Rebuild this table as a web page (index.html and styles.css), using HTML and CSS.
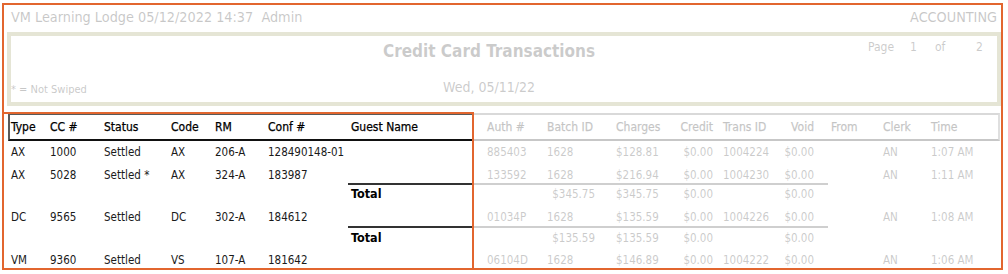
FILE: index.html
```html
<!DOCTYPE html>
<html>
<head>
<meta charset="utf-8">
<link rel="stylesheet" href="styles.css">
</head>
<body>
<div class="frame">
  <div class="topbar">
    <span>VM Learning Lodge 05/12/2022 14:37&nbsp; Admin</span>
    <span>ACCOUNTING</span>
  </div>
  <div class="banner">
    <div class="b-left"><span class="note">* = Not Swiped</span></div>
    <div class="b-center">
      <div class="title">Credit Card Transactions</div>
      <div class="date">Wed, 05/11/22</div>
    </div>
    <div class="b-right">
      <span class="pg-w">Page</span><span class="pg-n">1</span><span class="pg-of">of</span><span>2</span>
    </div>
  </div>
  <table class="report">
    <colgroup>
      <col style="width:39px"><col style="width:54px"><col style="width:67px"><col style="width:44px">
      <col style="width:53px"><col style="width:83px"><col style="width:136px"><col style="width:60px">
      <col style="width:69px"><col style="width:53px"><col style="width:54px"><col style="width:50px">
      <col style="width:58px"><col style="width:52px"><col style="width:48px"><col style="width:72px">
    </colgroup>
    <thead>
      <tr>
        <th>Type</th><th>CC #</th><th>Status</th><th>Code</th><th>RM</th><th>Conf #</th><th>Guest Name</th>
        <th>Auth #</th><th>Batch ID</th><th>Charges</th><th class="num credit">Credit</th><th>Trans ID</th>
        <th class="num void">Void</th><th>From</th><th>Clerk</th><th>Time</th>
      </tr>
    </thead>
    <tbody>
      <tr class="r1">
        <td>AX</td><td>1000</td><td>Settled</td><td>AX</td><td>206-A</td><td>128490148-01</td><td></td>
        <td>885403</td><td>1628</td><td>$128.81</td><td class="num credit">$0.00</td><td>1004224</td>
        <td class="num void">$0.00</td><td></td><td>AN</td><td>1:07 AM</td>
      </tr>
      <tr class="r2">
        <td>AX</td><td>5028</td><td>Settled *</td><td>AX</td><td>324-A</td><td>183987</td><td></td>
        <td>133592</td><td>1628</td><td>$216.94</td><td class="num credit">$0.00</td><td>1004230</td>
        <td class="num void">$0.00</td><td></td><td>AN</td><td>1:11 AM</td>
      </tr>
      <tr class="total t1">
        <td></td><td></td><td></td><td></td><td></td><td></td>
        <td class="line label">Total</td><td class="line"></td><td class="line num batch">$345.75</td>
        <td class="line">$345.75</td><td class="line num credit">$0.00</td><td class="line"></td>
        <td class="line num void">$0.00</td><td></td><td></td><td></td>
      </tr>
      <tr class="r3">
        <td>DC</td><td>9565</td><td>Settled</td><td>DC</td><td>302-A</td><td>184612</td><td></td>
        <td>01034P</td><td>1628</td><td>$135.59</td><td class="num credit">$0.00</td><td>1004226</td>
        <td class="num void">$0.00</td><td></td><td>AN</td><td>1:08 AM</td>
      </tr>
      <tr class="total t2">
        <td></td><td></td><td></td><td></td><td></td><td></td>
        <td class="line label">Total</td><td class="line"></td><td class="line num batch">$135.59</td>
        <td class="line">$135.59</td><td class="line num credit">$0.00</td><td class="line"></td>
        <td class="line num void">$0.00</td><td></td><td></td><td></td>
      </tr>
      <tr class="r4">
        <td>VM</td><td>9360</td><td>Settled</td><td>VS</td><td>107-A</td><td>181642</td><td></td>
        <td>06104D</td><td>1628</td><td>$146.89</td><td class="num credit">$0.00</td><td>1004222</td>
        <td class="num void">$0.00</td><td></td><td>AN</td><td>1:06 AM</td>
      </tr>
    </tbody>
  </table>
  <div class="spot"></div>
</div>
</body>
</html>
```

FILE: styles.css
```css
html, body {
  margin: 0;
  padding: 0;
  background: #fff;
}

body {
  font-family: "DejaVu Sans Condensed", "DejaVu Sans", sans-serif;
  font-stretch: condensed;
  color: #000;
}

.frame {
  position: relative;
  overflow: hidden;
  box-sizing: border-box;
  width: 1001px;
  height: 267px;
  margin: 3px 0 0 2px;
  border: 2px solid #e2662f;
}

.topbar {
  display: flex;
  justify-content: space-between;
  height: 27px;
  box-sizing: border-box;
  padding: 4px 4px 0 7px;
  font-size: 14.3px;
  line-height: 17px;
  color: #111;
}

.banner {
  display: grid;
  grid-template-columns: 200px 1fr 230px;
  height: 74px;
  box-sizing: border-box;
  margin-left: 3px;
  border: 4px solid #8e8e4c;
}

.b-left {
  display: flex;
  align-items: flex-end;
  padding: 0 0 6px 0;
}

.note {
  font-size: 11px;
  line-height: 13px;
  color: #111;
}

.b-center {
  display: flex;
  flex-direction: column;
  align-items: center;
  justify-content: space-between;
  padding: 5px 0 6px;
}

.title {
  font-size: 17px;
  font-weight: bold;
  line-height: 20px;
  color: #222;
}

.date {
  font-size: 14px;
  line-height: 17px;
  color: #222;
}

.b-right {
  display: flex;
  padding: 4px 0 0 101px;
  font-size: 12px;
  line-height: 14px;
  color: #222;
}

.pg-w { width: 42px; }
.pg-n { width: 25px; }
.pg-of { width: 41px; }

.report {
  table-layout: fixed;
  width: 992px;
  margin: 7px 0 0 4px;
  border-collapse: separate;
  border-spacing: 0;
  font-size: 11.5px;
  line-height: 14px;
}

.report th {
  height: 28px;
  box-sizing: border-box;
  padding: 0 0 0 3px;
  font-size: 12px;
  font-weight: normal;
  text-align: left;
  white-space: nowrap;
  color: #000;
  -webkit-text-stroke: 0.25px #000;
  border-top: 2px solid #5a5a5a;
  border-bottom: 2px solid #111;
}

.report th:first-child {
  border-left: 2px solid #5a5a5a;
  padding-left: 1px;
}

.report th:last-child {
  border-right: 2px solid #777;
}

.report td {
  padding: 0 0 0 3px;
  vertical-align: top;
  white-space: nowrap;
  color: #1a1a1a;
}

.report .num { text-align: right; }
.report .credit { padding-right: 7px; }
.report .void { padding-right: 14px; }
.report .batch { padding-right: 18px; }

.r1 { height: 22px; }
.r1 td { padding-top: 4px; }
.r2 { height: 20px; }
.r2 td { padding-top: 5px; }
.t1 { height: 23px; }
.t1 td { padding-top: 2px; }
.r3 { height: 20px; }
.r3 td { padding-top: 4px; }
.t2 { height: 22px; }
.t2 td { padding-top: 3px; }
.r4 { height: 22px; }
.r4 td { padding-top: 5px; }

.report td.line {
  border-top: 2px solid #333;
}

.report td.label {
  font-size: 12.5px;
  font-weight: bold;
  color: #000;
}

.spot {
  position: absolute;
  left: -2px;
  top: 107px;
  width: 472px;
  height: 158px;
  box-sizing: border-box;
  border: 2px solid #e2662f;
  box-shadow: 0 0 0 3000px rgba(255, 255, 255, 0.77);
  z-index: 2;
}
```
